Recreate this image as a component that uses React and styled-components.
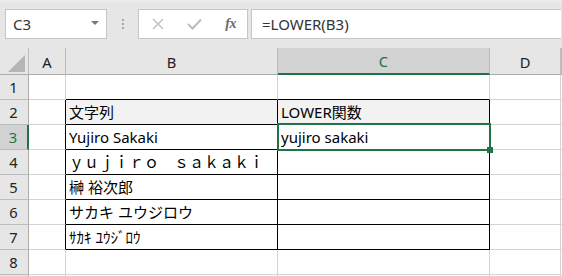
import React from 'react'
import styled, { createGlobalStyle } from 'styled-components'

const GREEN = '#217346'
const GRID = '#d4d4d4'
const HEAD_LINE = '#bcbcbc'
const CELL_FONT = `"Noto Sans", "Noto Sans CJK JP", sans-serif`
const UI_FONT = `"Noto Sans", "Noto Sans CJK JP", sans-serif`

const columns = [
    { key: 'a', label: 'A', width: 37 },
    { key: 'b', label: 'B', width: 212 },
    { key: 'c', label: 'C', width: 212, selected: true },
    { key: 'd', label: 'D', width: 71 },
    { key: 'e', label: '', width: 1 },
]

// row 9 only peeks in below the fold, so no number is shown for it
const rows = [
    { n: 1, top: true },
    { n: 2, table: true, fill: true, b: '文字列', c: 'LOWER関数' },
    { n: 3, table: true, selected: true, b: 'Yujiro Sakaki', c: 'yujiro sakaki' },
    { n: 4, table: true, b: 'ｙｕｊｉｒｏ　ｓａｋａｋｉ' },
    { n: 5, table: true, b: '榊 裕次郎' },
    { n: 6, table: true, b: 'サカキ ユウジロウ' },
    { n: 7, table: true, b: 'ｻｶｷ ﾕｳｼﾞﾛｳ' },
    { n: 8 },
    { n: 9, hidden: true },
]

const App = () => {
    return (
        <Window>
            <GlobalStyle />
            <FormulaBar>
                <NameBox>
                    <span>C3</span>
                    <DropArrow />
                </NameBox>
                <Grip>
                    <i /><i /><i />
                </Grip>
                <FxBox>
                    <FxIcon $muted>
                        <svg width="12" height="12" viewBox="0 0 12 12">
                            <path d="M1 1 L11 11 M11 1 L1 11" stroke="currentColor" strokeWidth="1.4" fill="none" />
                        </svg>
                    </FxIcon>
                    <FxIcon $muted>
                        <svg width="15" height="12" viewBox="0 0 15 12">
                            <path d="M1 6 L5.5 10.5 L14 1.5" stroke="currentColor" strokeWidth="2" fill="none" />
                        </svg>
                    </FxIcon>
                    <FxLabel>fx</FxLabel>
                </FxBox>
                <FormulaInput>=LOWER(B3)</FormulaInput>
            </FormulaBar>

            <Sheet>
                <Corner>
                    <CornerTriangle />
                </Corner>
                {columns.map(col => (
                    <ColHeader key={col.key} $selected={col.selected}>{col.label}</ColHeader>
                ))}

                {rows.map(row => (
                    <React.Fragment key={row.n}>
                        <RowHeader $selected={row.selected}>{row.hidden ? '' : row.n}</RowHeader>
                        <Cell $right={row.table ? '#000' : GRID} />
                        <Cell
                            $right={row.table ? '#000' : GRID}
                            $bottom={row.table || row.top ? '#000' : GRID}
                            $fill={row.fill}
                        >
                            {row.b}
                        </Cell>
                        <Cell
                            $right={row.table ? '#000' : GRID}
                            $bottom={row.table || row.top ? '#000' : GRID}
                            $fill={row.fill}
                        >
                            {row.c}
                            {row.selected && (
                                <>
                                    <Selection />
                                    <FillHandle />
                                </>
                            )}
                        </Cell>
                        <Cell />
                        <Cell />
                    </React.Fragment>
                ))}
            </Sheet>
        </Window>
    )
}

export default App


const GlobalStyle = createGlobalStyle`
    html, body {
        margin: 0;
        padding: 0;
        background: #ffffff;
        overflow: hidden;
    }
    * {
        box-sizing: border-box;
    }
`

const Window = styled.div`
    width: 562px;
    height: 276px;
    overflow: hidden;
    background: #ffffff;
    font-family: ${CELL_FONT};
`

const FormulaBar = styled.div`
    height: 48px;
    display: flex;
    align-items: flex-start;
    padding: 9px 1px 0 5px;
    background: linear-gradient(#ececec 0, #e6e6e6 4px);
`

const NameBox = styled.div`
    width: 102px;
    height: 30px;
    display: flex;
    align-items: center;
    justify-content: space-between;
    padding: 0 7px 0 7px;
    background: #ffffff;
    border: 1px solid #c6c6c6;
    font-family: ${UI_FONT};
    font-size: 15px;
    color: #333333;
`

const DropArrow = styled.span`
    width: 0;
    height: 0;
    border-left: 4px solid transparent;
    border-right: 4px solid transparent;
    border-top: 4px solid #7a7a7a;
    margin-top: -2px;
`

const Grip = styled.div`
    width: 31px;
    height: 30px;
    display: flex;
    flex-direction: column;
    align-items: center;
    justify-content: center;
    gap: 2px;

    i {
        width: 2px;
        height: 2px;
        background: #a8a8a8;
    }
`

const FxBox = styled.div`
    width: 110px;
    height: 30px;
    display: flex;
    align-items: center;
    justify-content: space-between;
    padding: 0 11px 0 13px;
    background: #ffffff;
    border: 1px solid #c6c6c6;
`

const FxIcon = styled.span`
    display: flex;
    color: ${pr => pr.$muted ? '#bdbdbd' : '#666666'};
`

const FxLabel = styled.span`
    font-family: "Liberation Serif", serif;
    font-style: italic;
    font-size: 14px;
    font-weight: 700;
    color: #6a6a6a;
    letter-spacing: -0.5px;
`

const FormulaInput = styled.div`
    flex: 1;
    height: 30px;
    margin-left: 3px;
    display: flex;
    align-items: center;
    padding-left: 10px;
    background: #ffffff;
    border: 1px solid #c6c6c6;
    border-right: none;
    font-family: ${UI_FONT};
    font-size: 15px;
    color: #333333;
`

const Sheet = styled.div`
    display: grid;
    grid-template-columns: 29px ${columns.map(c => c.width + 'px').join(' ')};
    grid-template-rows: 27px repeat(${rows.length}, 25px);
`

const Corner = styled.div`
    display: flex;
    align-items: flex-end;
    justify-content: flex-end;
    padding: 0 3px 2px 0;
    background: #e6e6e6;
    border-right: 1px solid ${HEAD_LINE};
    border-bottom: 1px solid #ababab;
`

const CornerTriangle = styled.span`
    width: 17px;
    height: 17px;
    background: #b5b5b5;
    clip-path: polygon(100% 0, 100% 100%, 0 100%);
`

const ColHeader = styled.div`
    display: flex;
    align-items: center;
    justify-content: center;
    padding-top: 1px;
    background: ${pr => pr.$selected ? '#d2d2d2' : '#e6e6e6'};
    color: ${pr => pr.$selected ? GREEN : '#222222'};
    border-right: 1px solid ${HEAD_LINE};
    border-bottom: ${pr => pr.$selected ? `2px solid ${GREEN}` : '1px solid #ababab'};
    font-size: 14.7px;
`

const RowHeader = styled.div`
    display: flex;
    align-items: center;
    justify-content: center;
    padding-right: 1px;
    background: ${pr => pr.$selected ? '#d2d2d2' : '#e6e6e6'};
    color: ${pr => pr.$selected ? GREEN : '#222222'};
    border-right: ${pr => pr.$selected ? `2px solid ${GREEN}` : '1px solid #ababab'};
    border-bottom: 1px solid ${HEAD_LINE};
    font-size: 14.7px;
`

const Cell = styled.div`
    position: relative;
    padding-left: 3px;
    background: ${pr => pr.$fill ? '#f2f2f2' : '#ffffff'};
    border-right: 1px solid ${pr => pr.$right || GRID};
    border-bottom: 1px solid ${pr => pr.$bottom || GRID};
    font-size: 15px;
    line-height: 24px;
    color: #000000;
    white-space: nowrap;
`

const Selection = styled.span`
    position: absolute;
    z-index: 2;
    top: -2px;
    left: -1px;
    right: -2px;
    bottom: -2px;
    border: 2px solid ${GREEN};
    pointer-events: none;
`

const FillHandle = styled.span`
    position: absolute;
    z-index: 3;
    right: -4px;
    bottom: -4px;
    width: 6px;
    height: 6px;
    background: ${GREEN};
`
